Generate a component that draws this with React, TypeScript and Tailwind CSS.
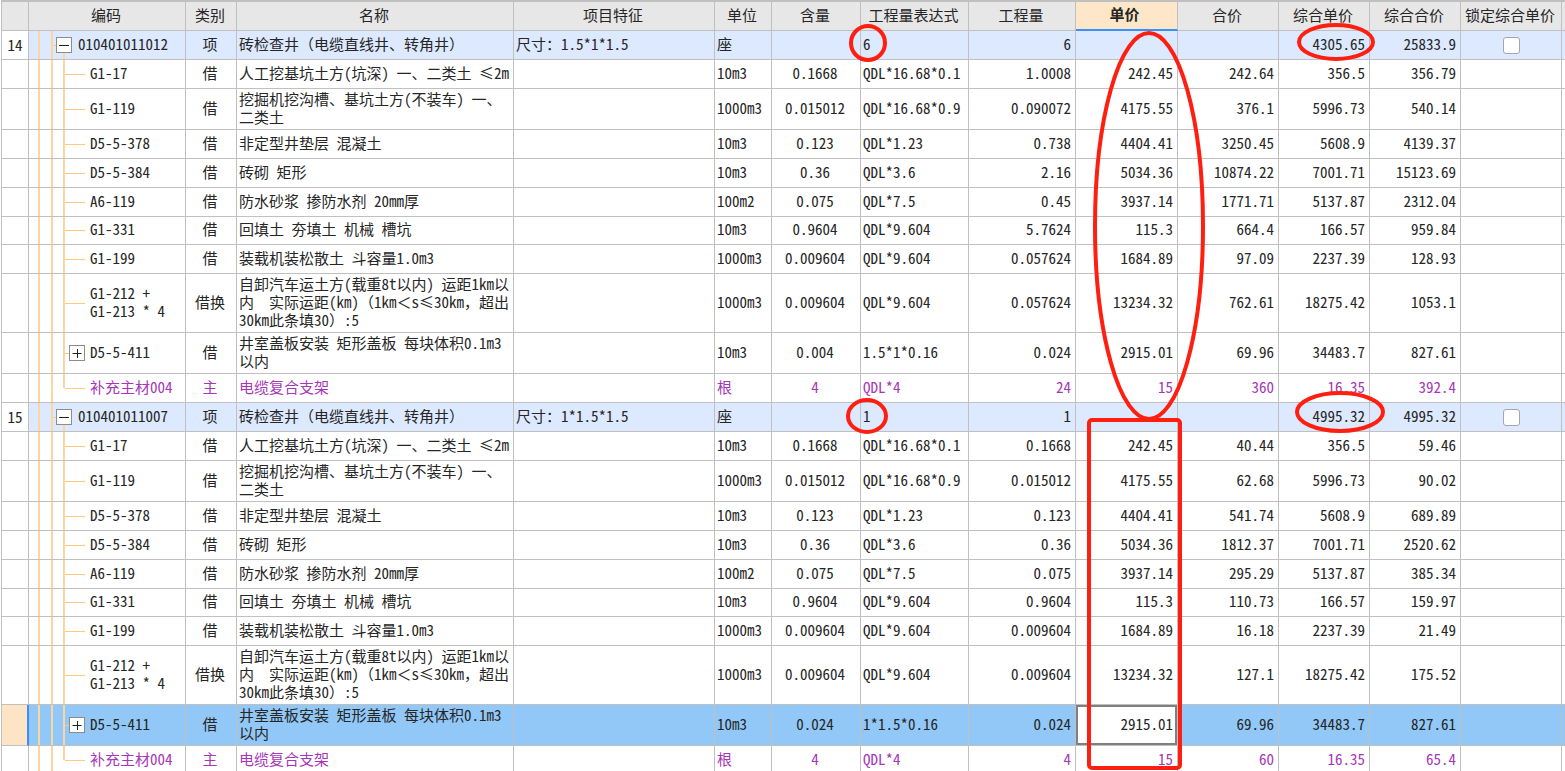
import { useState } from "react";
import { clsx } from "clsx";

type Kind = "item" | "sub" | "group" | "last";

type Row = {
    no?: string;
    kind: Kind;
    code: string;
    type: string;
    name: string;
    feature?: string;
    unit: string;
    content?: string;
    expr: string;
    qty: string;
    price?: string;
    total?: string;
    unitPrice: string;
    sum: string;
    size?: "short" | "double" | "triple";
    active?: boolean;
};

const columns = [
    { label: "", width: "w-[28px]" },
    { label: "编码", width: "w-[157px]" },
    { label: "类别", width: "w-[51px]" },
    { label: "名称", width: "w-[277px]" },
    { label: "项目特征", width: "w-[201px]" },
    { label: "单位", width: "w-[57px]" },
    { label: "含量", width: "w-[89px]" },
    { label: "工程量表达式", width: "w-[108px]" },
    { label: "工程量", width: "w-[107px]" },
    { label: "单价", width: "w-[102px]", current: true },
    { label: "合价", width: "w-[101px]" },
    { label: "综合单价", width: "w-[91px]" },
    { label: "综合合价", width: "w-[91px]" },
    { label: "锁定综合单价", width: "w-[101px]" },
    { label: "", width: "w-[3px]" },
];

const DIG = "挖掘机挖沟槽、基坑土方(不装车) 一、\n二类土";
const TRUCK = "自卸汽车运土方(载重8t以内) 运距1km以\n内　实际运距(km)（1km＜s≤30km，超出\n30km此条填30）:5";
const COVER = "井室盖板安装 矩形盖板 每块体积0.1m3\n以内";

const rows: Row[] = [
    { no: "14", kind: "item", code: "010401011012", type: "项", name: "砖检查井（电缆直线井、转角井）", feature: "尺寸：1.5*1*1.5", unit: "座", expr: "6", qty: "6", unitPrice: "4305.65", sum: "25833.9" },
    { kind: "sub", code: "G1-17", type: "借", name: "人工挖基坑土方(坑深) 一、二类土 ≤2m", unit: "10m3", content: "0.1668", expr: "QDL*16.68*0.1", qty: "1.0008", price: "242.45", total: "242.64", unitPrice: "356.5", sum: "356.79" },
    { kind: "sub", code: "G1-119", type: "借", name: DIG, unit: "1000m3", content: "0.015012", expr: "QDL*16.68*0.9", qty: "0.090072", price: "4175.55", total: "376.1", unitPrice: "5996.73", sum: "540.14", size: "double" },
    { kind: "sub", code: "D5-5-378", type: "借", name: "非定型井垫层 混凝土", unit: "10m3", content: "0.123", expr: "QDL*1.23", qty: "0.738", price: "4404.41", total: "3250.45", unitPrice: "5608.9", sum: "4139.37" },
    { kind: "sub", code: "D5-5-384", type: "借", name: "砖砌 矩形", unit: "10m3", content: "0.36", expr: "QDL*3.6", qty: "2.16", price: "5034.36", total: "10874.22", unitPrice: "7001.71", sum: "15123.69" },
    { kind: "sub", code: "A6-119", type: "借", name: "防水砂浆 掺防水剂 20mm厚", unit: "100m2", content: "0.075", expr: "QDL*7.5", qty: "0.45", price: "3937.14", total: "1771.71", unitPrice: "5137.87", sum: "2312.04" },
    { kind: "sub", code: "G1-331", type: "借", name: "回填土 夯填土 机械 槽坑", unit: "10m3", content: "0.9604", expr: "QDL*9.604", qty: "5.7624", price: "115.3", total: "664.4", unitPrice: "166.57", sum: "959.84", size: "short" },
    { kind: "sub", code: "G1-199", type: "借", name: "装载机装松散土 斗容量1.0m3", unit: "1000m3", content: "0.009604", expr: "QDL*9.604", qty: "0.057624", price: "1684.89", total: "97.09", unitPrice: "2237.39", sum: "128.93" },
    { kind: "sub", code: "G1-212 +\nG1-213 * 4", type: "借换", name: TRUCK, unit: "1000m3", content: "0.009604", expr: "QDL*9.604", qty: "0.057624", price: "13234.32", total: "762.61", unitPrice: "18275.42", sum: "1053.1", size: "triple" },
    { kind: "group", code: "D5-5-411", type: "借", name: COVER, unit: "10m3", content: "0.004", expr: "1.5*1*0.16", qty: "0.024", price: "2915.01", total: "69.96", unitPrice: "34483.7", sum: "827.61", size: "double" },
    { kind: "last", code: "补充主材004", type: "主", name: "电缆复合支架", unit: "根", content: "4", expr: "QDL*4", qty: "24", price: "15", total: "360", unitPrice: "16.35", sum: "392.4" },
    { no: "15", kind: "item", code: "010401011007", type: "项", name: "砖检查井（电缆直线井、转角井）", feature: "尺寸：1*1.5*1.5", unit: "座", expr: "1", qty: "1", unitPrice: "4995.32", sum: "4995.32" },
    { kind: "sub", code: "G1-17", type: "借", name: "人工挖基坑土方(坑深) 一、二类土 ≤2m", unit: "10m3", content: "0.1668", expr: "QDL*16.68*0.1", qty: "0.1668", price: "242.45", total: "40.44", unitPrice: "356.5", sum: "59.46" },
    { kind: "sub", code: "G1-119", type: "借", name: DIG, unit: "1000m3", content: "0.015012", expr: "QDL*16.68*0.9", qty: "0.015012", price: "4175.55", total: "62.68", unitPrice: "5996.73", sum: "90.02", size: "double" },
    { kind: "sub", code: "D5-5-378", type: "借", name: "非定型井垫层 混凝土", unit: "10m3", content: "0.123", expr: "QDL*1.23", qty: "0.123", price: "4404.41", total: "541.74", unitPrice: "5608.9", sum: "689.89" },
    { kind: "sub", code: "D5-5-384", type: "借", name: "砖砌 矩形", unit: "10m3", content: "0.36", expr: "QDL*3.6", qty: "0.36", price: "5034.36", total: "1812.37", unitPrice: "7001.71", sum: "2520.62" },
    { kind: "sub", code: "A6-119", type: "借", name: "防水砂浆 掺防水剂 20mm厚", unit: "100m2", content: "0.075", expr: "QDL*7.5", qty: "0.075", price: "3937.14", total: "295.29", unitPrice: "5137.87", sum: "385.34" },
    { kind: "sub", code: "G1-331", type: "借", name: "回填土 夯填土 机械 槽坑", unit: "10m3", content: "0.9604", expr: "QDL*9.604", qty: "0.9604", price: "115.3", total: "110.73", unitPrice: "166.57", sum: "159.97", size: "short" },
    { kind: "sub", code: "G1-199", type: "借", name: "装载机装松散土 斗容量1.0m3", unit: "1000m3", content: "0.009604", expr: "QDL*9.604", qty: "0.009604", price: "1684.89", total: "16.18", unitPrice: "2237.39", sum: "21.49" },
    { kind: "sub", code: "G1-212 +\nG1-213 * 4", type: "借换", name: TRUCK, unit: "1000m3", content: "0.009604", expr: "QDL*9.604", qty: "0.009604", price: "13234.32", total: "127.1", unitPrice: "18275.42", sum: "175.52", size: "triple" },
    { kind: "group", code: "D5-5-411", type: "借", name: COVER, unit: "10m3", content: "0.024", expr: "1*1.5*0.16", qty: "0.024", price: "2915.01", total: "69.96", unitPrice: "34483.7", sum: "827.61", size: "double", active: true },
    { kind: "last", code: "补充主材004", type: "主", name: "电缆复合支架", unit: "根", content: "4", expr: "QDL*4", qty: "4", price: "15", total: "60", unitPrice: "16.35", sum: "65.4" },
];

function Toggle({ open, label }: { open: boolean; label: string }) {
    return (
        <button type="button" aria-label={label} className="flex h-4 w-4 shrink-0 items-center justify-center border border-[#8c8c8c] bg-white">
            <svg viewBox="0 0 10 10" className="h-[10px] w-[10px] stroke-[#222]" fill="none">
                <path d={open ? "M0 5.5H10" : "M0.5 5.5H9.5M5.5 1V10"} />
            </svg>
        </button>
    );
}

// vertical guides plus the branch that leads to the code
function CodeCell({ row }: { row: Row }) {
    return (
        <div className="flex h-full items-center">
            <span className="ml-[9px] w-[13px] self-stretch border-l-2 border-[#fdd5a0]" />
            <span className="w-[2px] self-stretch bg-[#fdd5a0]" />
            {row.kind === "item" ? (
                <>
                    <span className="h-px w-[3px] bg-[#ffc87c]" />
                    <div className="flex flex-col items-center self-stretch">
                        <span className="flex-1" />
                        <Toggle open label={`收起 ${row.code}`} />
                        <span className="w-[2px] flex-1 bg-[#fdd5a0]" />
                    </div>
                    <span className="ml-[6px] pb-[3px]">{row.code}</span>
                </>
            ) : (
                <>
                    <div className="ml-[10px] flex w-[2px] flex-col self-stretch">
                        <span className="flex-1 bg-[#fdd5a0]" />
                        <span className={clsx("flex-1", row.kind !== "last" && "bg-[#fdd5a0]")} />
                    </div>
                    {row.kind === "group" ? (
                        <>
                            <span className="h-px w-1 bg-[#ffc87c]" />
                            <Toggle open={false} label={`展开 ${row.code}`} />
                        </>
                    ) : (
                        <span className="h-px w-5 bg-[#ffc87c]" />
                    )}
                    <span className="ml-[5px] pb-[3px]">{row.code}</span>
                </>
            )}
        </div>
    );
}

function PriceRow({ row }: { row: Row }) {
    const [locked, setLocked] = useState(false);
    const base = clsx(
        "border-r border-b border-[#c0c0c0]",
        row.size === "short" && "h-[28px]",
        row.size === "double" && "h-[41px]",
        row.size === "triple" && "h-[59px]",
        !row.size && "h-[29px]",
    );
    const cell = clsx(base, "pt-0 pr-[4px] pb-[3px] pl-[2px]");
    return (
        <tr className={clsx(row.kind === "item" && "bg-[#dce9fe]", row.active && "bg-[#92c8f7]", row.kind === "last" && "text-[#a737b9]")}>
            <td
                className={clsx(
                    base,
                    "border-l p-0 text-center",
                    row.active ? "border-r-2 border-r-[#3a8ffa] bg-[#fde4c5]" : "bg-white",
                )}
            >
                {row.no}
            </td>
            <td className={clsx(base, "p-0")}>
                <CodeCell row={row} />
            </td>
            <td className={clsx(cell, "text-center")}>{row.type}</td>
            <td className={clsx(base, "pt-0 pr-0 pb-[3px] pl-[2px]")}>{row.name}</td>
            <td className={cell}>{row.feature}</td>
            <td className={cell}>{row.unit}</td>
            <td className={clsx(cell, "text-center")}>{row.content}</td>
            <td className={cell}>{row.expr}</td>
            <td className={clsx(cell, "text-right")}>{row.qty}</td>
            <td className={clsx(row.active ? clsx(base, "p-0") : cell, "text-right")}>
                {row.active ? (
                    <input
                        aria-label="单价"
                        defaultValue={row.price}
                        className="block h-full w-full border-2 border-[#7f7f7f] bg-white pr-[2px] pb-[4px] text-right outline-none"
                    />
                ) : (
                    row.price
                )}
            </td>
            <td className={clsx(cell, "text-right")}>{row.total}</td>
            <td className={clsx(cell, "text-right")}>{row.unitPrice}</td>
            <td className={clsx(cell, "text-right")}>{row.sum}</td>
            <td className={clsx(base, "p-0")}>
                {row.kind === "item" && (
                    <input
                        type="checkbox"
                        aria-label={`锁定综合单价 ${row.code}`}
                        checked={locked}
                        onChange={() => setLocked(!locked)}
                        className="mx-auto block h-[17px] w-[17px] appearance-none rounded-[3px] border border-[#a6a6a6] bg-white checked:bg-[#3a8ffa]"
                    />
                )}
            </td>
            <td className="border-b border-[#c0c0c0] p-0" />
        </tr>
    );
}

// red pen marks over the compared prices
function Marks() {
    return (
        <svg viewBox="0 0 1565 771" preserveAspectRatio="none" className="pointer-events-none absolute top-0 left-0 h-[771px] w-full" fill="none" stroke="#ff1f10" strokeWidth="4">
            <ellipse cx="868" cy="43" rx="17" ry="17" />
            <ellipse cx="1336" cy="42" rx="37" ry="17" />
            <ellipse cx="1149" cy="226" rx="54" ry="193" />
            <ellipse cx="867" cy="416" rx="19" ry="16" />
            <ellipse cx="1340" cy="412" rx="43" ry="19" />
            <rect x="1089" y="420" width="91" height="348" rx="3" />
        </svg>
    );
}

export default function App() {
    return (
        <div className="relative h-screen overflow-hidden bg-white pl-px font-['Noto_Sans_Mono_CJK_SC','Noto_Sans_CJK_SC',sans-serif] text-[15px] leading-[18px] text-[#262626]" lang="zh-CN">
            <table className="w-full table-fixed border-separate border-spacing-0 whitespace-pre">
                <colgroup>
                    {columns.map((col, i) => (
                        <col key={i} className={col.width} />
                    ))}
                </colgroup>
                <thead>
                    <tr>
                        {columns.map((col, i) => (
                            <th
                                key={i}
                                className={clsx(
                                    "h-[31px] border-t-2 border-r border-b border-[#c0c0c0] pt-0 pl-0 first:border-l last:border-r-0",
                                    col.current ? "border-b-2 border-b-[#3a8ffa] bg-[#fee6c8] pr-[4px] pb-[3px] font-bold" : "bg-[#e7e7e7] pr-[2px] pb-[2px] font-normal",
                                )}
                            >
                                {col.label}
                            </th>
                        ))}
                    </tr>
                </thead>
                <tbody>
                    {rows.map((row, i) => (
                        <PriceRow key={i} row={row} />
                    ))}
                </tbody>
            </table>
            <Marks />
        </div>
    );
}
